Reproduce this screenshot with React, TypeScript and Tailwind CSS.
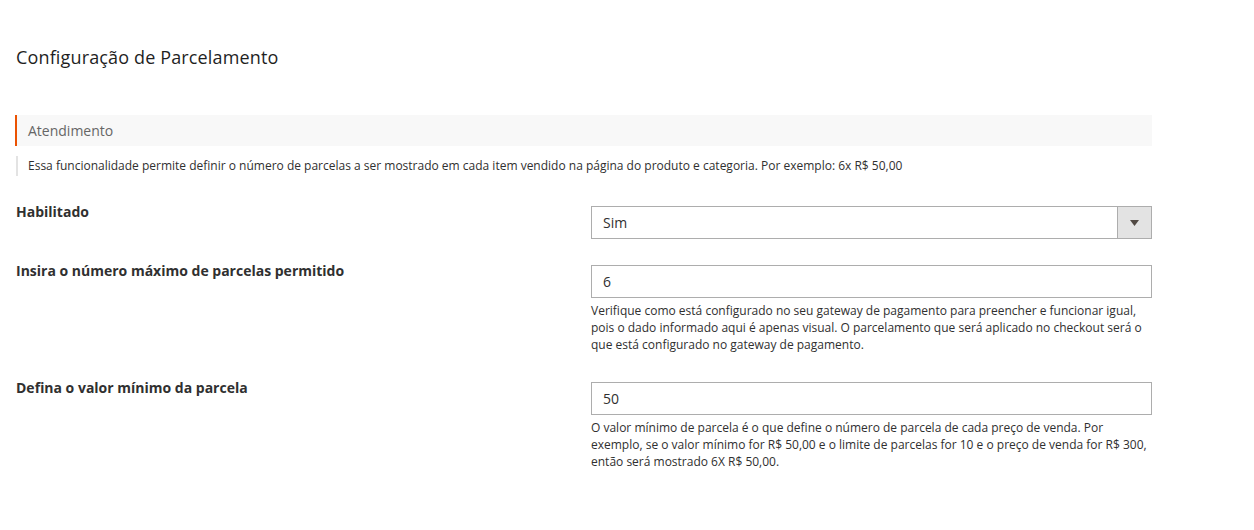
import React from "react";

export default function App() {
  return (
    <div className="min-h-[530px] w-[1254px] bg-white text-[#303030]" style={{ fontFamily: '"Open Sans", sans-serif' }}>
      <div className="pl-[16px] pr-[102px]">
        <h1 className="pt-[45px] text-[18px] leading-[24px] font-normal tracking-[0.008em] text-[#1f1f1f]">
          Configuração de Parcelamento
        </h1>
        <div className="mt-[46px] -ml-px flex h-[31px] items-center border-l-2 border-[#eb5202] bg-[#f8f8f8] pl-[11px] text-[14px] text-[#666666]">
          Atendimento
        </div>
        <div className="mt-[10px] flex h-[20px] items-center border-l-2 border-[#e3e3e3] pl-[10px] text-[12px] text-[#303030]">
          Essa funcionalidade permite definir o número de parcelas a ser mostrado em cada item vendido na página do produto e categoria. Por exemplo: 6x R$ 50,00
        </div>

        <div className="mt-[27px] grid grid-cols-[575px_561px]">
          <div className="text-[14px] leading-[18px] font-bold">Habilitado</div>
          <div className="pt-[3px]">
            <div className="flex h-[33px] items-stretch border border-[#adadad] bg-white">
              <div className="flex flex-1 items-center pl-[11px] text-[14px]">Sim</div>
              <div className="flex w-[34px] items-center justify-center border-l border-[#adadad] bg-[#e3e3e3]">
                <svg width="9" height="6" viewBox="0 0 9 6">
                  <polygon points="0,0 9,0 4.5,6" fill="#514943" />
                </svg>
              </div>
            </div>
          </div>
        </div>

        <div className="mt-[23px] grid grid-cols-[575px_561px]">
          <div className="text-[14px] leading-[18px] font-bold">Insira o número máximo de parcelas permitido</div>
          <div className="pt-[3px]">
            <div className="flex h-[33px] items-center border border-[#adadad] bg-white pl-[11px] text-[14px]">6</div>
            <p className="mt-[4px] text-[12px] leading-[17px]">
              Verifique como está configurado no seu gateway de pagamento para preencher e funcionar igual, pois o dado informado aqui é apenas visual. O parcelamento que será aplicado no checkout será o que está configurado no gateway de pagamento.
            </p>
          </div>
        </div>

        <div className="mt-[26px] grid grid-cols-[575px_561px]">
          <div className="text-[14px] leading-[18px] font-bold">Defina o valor mínimo da parcela</div>
          <div className="pt-[3px]">
            <div className="flex h-[33px] items-center border border-[#adadad] bg-white pl-[11px] text-[14px]">50</div>
            <p className="mt-[4px] text-[12px] leading-[17px]">
              O valor mínimo de parcela é o que define o número de parcela de cada preço de venda. Por exemplo, se o valor mínimo for R$ 50,00 e o limite de parcelas for 10 e o preço de venda for R$ 300, então será mostrado 6X R$ 50,00.
            </p>
          </div>
        </div>
      </div>
    </div>
  );
}
